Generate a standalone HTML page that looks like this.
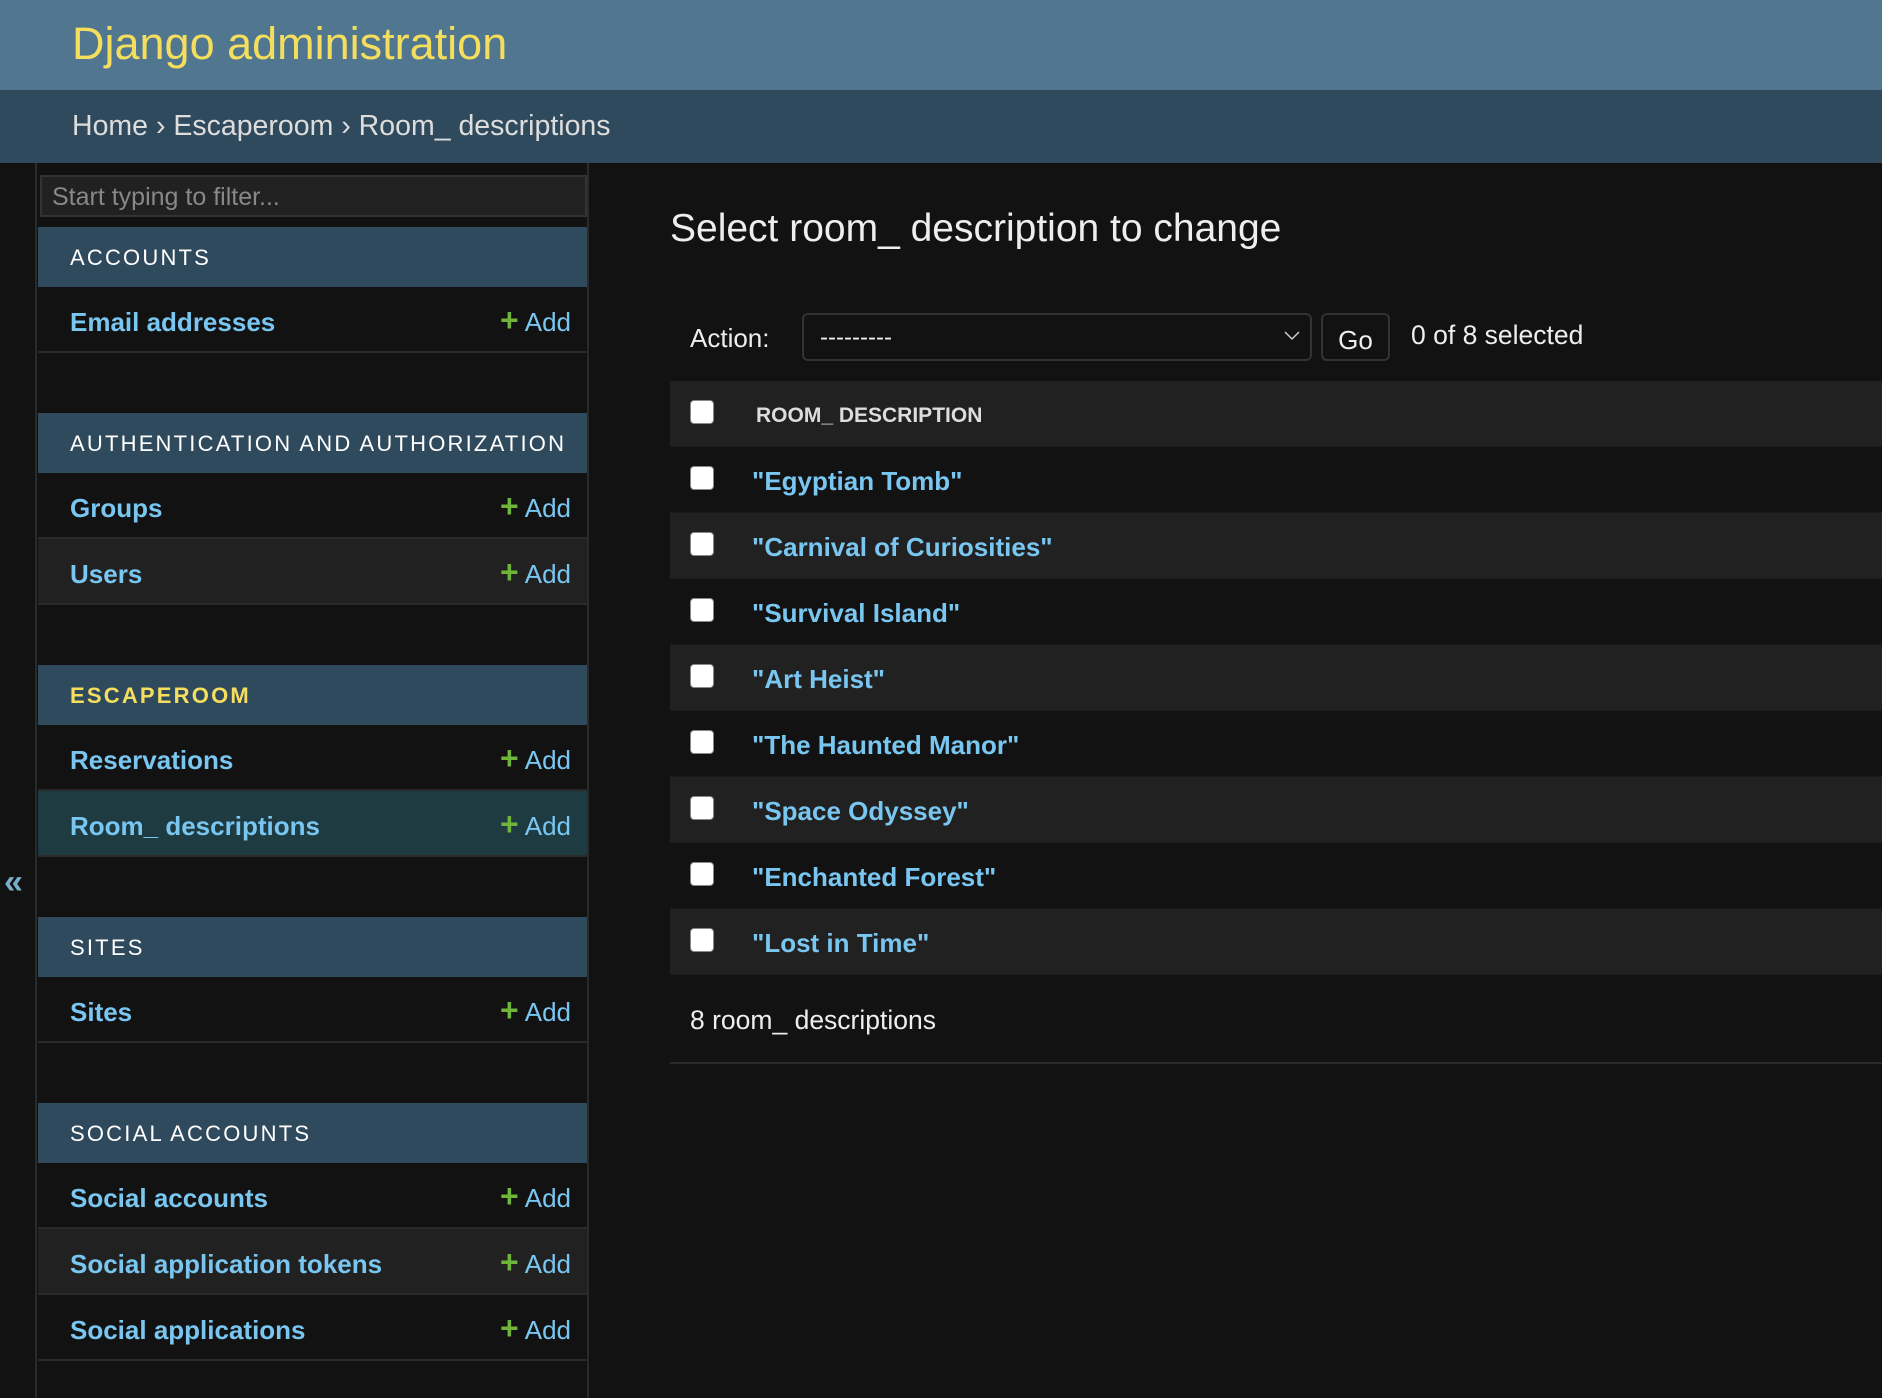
<!DOCTYPE html>
<html><head><meta charset="utf-8"><style>
*{box-sizing:border-box;margin:0;padding:0}
body{width:1882px;height:1398px;overflow:hidden;background:#121212;font-family:"Liberation Sans",sans-serif;position:relative;color:#eee}
.hdr{position:absolute;left:0;top:0;width:1882px;height:90px;background:#50778f}
.hdr h1{position:absolute;left:72px;top:18px;font-size:45px;font-weight:normal;color:#f5dd5d}
.bc{position:absolute;left:0;top:90px;width:1882px;height:73px;background:#2f4a5d;color:#ddd;font-size:28.5px;padding:20px 0 0 72px}
.strip{position:absolute;left:0;top:163px;width:37px;height:1235px;background:#121212;border-right:2px solid #2a2a2a}
.coll{position:absolute;left:4px;top:863px;font-size:34px;color:#79aec8;font-weight:bold}
.side{position:absolute;left:38px;top:163px;width:551px;height:1235px;border-right:2px solid #2a2a2a;background:#121212}
.filter{position:absolute;left:2px;top:12px;width:547px;height:42px;border:2px solid #333;background:#212121;color:#888;font-size:25px;padding:6px 10px}
.sec{position:absolute;left:0;width:549px}
.sh{height:60px;background:#2f4a5d;color:#fff;font-size:22px;letter-spacing:2.2px;padding:18px 0 0 32px}
.row{height:66px;border-bottom:2px solid #2a2a2a;position:relative;background:#121212}
.row.alt{background:#212121}.row.sel{background:#1d3b40}
.row b{position:absolute;left:32px;top:20px;font-size:26px;color:#79c6f1}
.add{position:absolute;right:16px;top:20px;font-size:26px;color:#79c6f1}
.add i{font-style:normal;color:#6fb53b;font-weight:bold;margin-right:6px;font-size:32px;line-height:26px}
.main{position:absolute;left:670px;top:163px;width:1212px}
.main h2{position:absolute;left:0;top:44px;font-size:39px;font-weight:normal;color:#eee}
.act{position:absolute;left:20px;top:160px;font-size:26px}
.selbox{position:absolute;left:132px;top:150px;width:510px;height:48px;border:2px solid #333;border-radius:6px;padding:9px 16px;font-size:24px}
.go{position:absolute;left:651px;top:150px;width:69px;height:48px;border:2px solid #333;border-radius:6px;font-size:26px;text-align:center;padding-top:10px}
.cnt{position:absolute;left:741px;top:157px;font-size:26.5px}
.tbl{position:absolute;left:0;top:218px;width:1212px}
.tr{height:66px;position:relative;border-bottom:1px solid #1a1a1a}
.tr.alt{background:#212121}
.cb{position:absolute;left:20px;top:19px;width:24px;height:24px;background:#fff;border-radius:4px;border:1px solid #888}
.tr a{position:absolute;left:82px;top:19px;font-size:26px;font-weight:bold;color:#79c6f1;text-decoration:none}
.th{position:absolute;left:86px;top:23px;font-size:21px;font-weight:bold;color:#ddd}
.foot{height:89px;border-bottom:2px solid #2a2a2a;font-size:26.5px;padding:30px 0 0 20px}
</style></head><body>
<div class="hdr"><h1>Django administration</h1></div>
<div class="bc">Home › Escaperoom › Room_ descriptions</div>
<div class="strip"></div><div class="coll">«</div>
<div class="side">
<div class="filter">Start typing to filter...</div>
<div class="sec" style="top:64px"><div class="sh">ACCOUNTS</div>
<div class="row"><b>Email addresses</b><span class="add"><i>+</i>Add</span></div></div>
<div class="sec" style="top:250px"><div class="sh">AUTHENTICATION AND AUTHORIZATION</div>
<div class="row"><b>Groups</b><span class="add"><i>+</i>Add</span></div>
<div class="row alt"><b>Users</b><span class="add"><i>+</i>Add</span></div></div>
<div class="sec" style="top:502px"><div class="sh" style="color:#f5dd5d;font-weight:bold">ESCAPEROOM</div>
<div class="row"><b>Reservations</b><span class="add"><i>+</i>Add</span></div>
<div class="row sel"><b>Room_ descriptions</b><span class="add"><i>+</i>Add</span></div></div>
<div class="sec" style="top:754px"><div class="sh">SITES</div>
<div class="row"><b>Sites</b><span class="add"><i>+</i>Add</span></div></div>
<div class="sec" style="top:940px"><div class="sh">SOCIAL ACCOUNTS</div>
<div class="row"><b>Social accounts</b><span class="add"><i>+</i>Add</span></div>
<div class="row alt"><b>Social application tokens</b><span class="add"><i>+</i>Add</span></div>
<div class="row"><b>Social applications</b><span class="add"><i>+</i>Add</span></div></div>
</div>
<div class="main">
<h2>Select room_ description to change</h2>
<div class="act">Action:</div>
<div class="selbox">---------<svg style="position:absolute;right:10px;top:16px" width="16" height="10"><path d="M1 1L8 8L15 1" stroke="#ccc" stroke-width="1.5" fill="none"/></svg></div>
<div class="go">Go</div>
<div class="cnt">0 of 8 selected</div>
<div class="tbl">
<div class="tr alt"><span class="cb"></span><span class="th">ROOM_ DESCRIPTION</span></div>
<div class="tr"><span class="cb"></span><a>"Egyptian Tomb"</a></div>
<div class="tr alt"><span class="cb"></span><a>"Carnival of Curiosities"</a></div>
<div class="tr"><span class="cb"></span><a>"Survival Island"</a></div>
<div class="tr alt"><span class="cb"></span><a>"Art Heist"</a></div>
<div class="tr"><span class="cb"></span><a>"The Haunted Manor"</a></div>
<div class="tr alt"><span class="cb"></span><a>"Space Odyssey"</a></div>
<div class="tr"><span class="cb"></span><a>"Enchanted Forest"</a></div>
<div class="tr alt"><span class="cb"></span><a>"Lost in Time"</a></div>
<div class="foot">8 room_ descriptions</div>
</div></div>
</body></html>
